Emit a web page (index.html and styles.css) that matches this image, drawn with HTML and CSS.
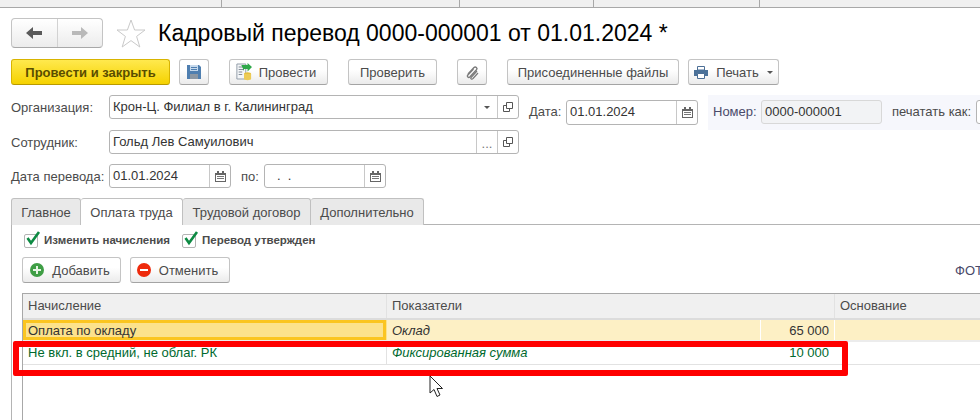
FILE: index.html
```html
<!DOCTYPE html>
<html lang="ru">
<head>
<meta charset="utf-8">
<title>Кадровый перевод</title>
<link rel="stylesheet" href="styles.css">
</head>
<body>
<div class="page">
  <div class="topstrip"><i class="s1"></i><i class="s2"></i><i class="s3"></i><i class="s4"></i></div>

  <div class="header">
    <div class="nav">
      <span class="nav-b"><svg width="16" height="12" viewBox="0 0 16 12"><path d="M0 6L7 0V4H16V8H7V12Z" fill="#5a5a5a"/></svg></span>
      <span class="nav-b"><svg width="16" height="12" viewBox="0 0 16 12"><path d="M16 6L9 0V4H0V8H9V12Z" fill="#b9b9b9"/></svg></span>
    </div>
    <svg class="star" width="30" height="29" viewBox="0 0 30 29"><path d="M15 1L18.6 11H29L20.6 17.4L23.8 28L15 21.6L6.2 28L9.4 17.4L1 11H11.4Z" fill="#fff" stroke="#c9c9c9"/></svg>
    <h1 class="title">Кадровый перевод 0000-000001 от 01.01.2024 *</h1>
  </div>

  <div class="toolbar">
    <button class="btn primary">Провести и закрыть</button>
    <button class="btn icon save"><svg width="16" height="16" viewBox="0 0 16 16"><path d="M1 1H13L15 3V15H1Z" fill="#4f7fb0"/><path d="M4 1H12V7H4Z" fill="#c6d9ec"/><path d="M4 10H12V15H4Z" fill="#8b97a3"/><path d="M5 3H11V4H5ZM5 5H11V6H5Z" fill="#4f7fb0"/></svg></button>
    <button class="btn post"><svg width="16" height="18" viewBox="0 0 18 18" preserveAspectRatio="none"><path d="M1 1H11V16H1Z" fill="#f4f6f8" stroke="#8e9aa6"/><path d="M3 4H9M3 6.500H9M3 9H7M3 11.500H7" stroke="#7b8794"/><path d="M6 2H13V0L18 4L13 8.500V6H9V8Z" fill="#2fa84a"/><ellipse cx="13" cy="11" rx="4" ry="1.800" fill="#e5bf3c"/><path d="M9 11H17V16C17 17.500 9 17.500 9 16Z" fill="#eccb55"/></svg><span>Провести</span></button>
    <button class="btn check">Проверить</button>
    <button class="btn icon clip"><svg width="14" height="15" viewBox="0 0 14 15"><path d="M3 9L9 2.500C10.500 1 13 3 11.500 4.800L4.800 12C3.500 13.300 1.500 11.500 2.800 10L8.500 4" fill="none" stroke="#7a7a7a" stroke-width="1.400"/><path d="M12 6L6 12.500C5 13.800 7 14.800 8 13.500L13 8" fill="none" stroke="#7a7a7a" stroke-width="1.200"/></svg></button>
    <button class="btn files">Присоединенные файлы</button>
    <button class="btn print"><svg width="14" height="13" viewBox="0 0 14 13"><path d="M3.500.500H10.500V4H3.500Z" fill="#fff" stroke="#4c6f96"/><path d="M0 4H14V10H0Z" fill="#4c7299"/><path d="M3.500 7.500H10.500V12.500H3.500Z" fill="#fff" stroke="#4c6f96"/></svg><span>Печать</span><b class="caret"></b></button>
  </div>

  <div class="fields">
    <div class="fields-main">
      <div class="row">
        <label class="lbl">Организация:</label>
        <div class="input wide"><span class="val">Крон-Ц. Филиал в г. Калининград</span><span class="ib"><b class="caret"></b></span><span class="ib"><svg class="open" width="10" height="10" viewBox="0 0 10 10"><path d="M3.500.500H9.500V6.500H3.500ZM3.500 3.500H.500V9.500H6.500V6.500" fill="none" stroke="#555"/></svg></span></div>
      </div>
      <div class="row">
        <label class="lbl">Сотрудник:</label>
        <div class="input wide"><span class="val">Гольд Лев Самуилович</span><span class="ib dots">...</span><span class="ib"><svg class="open" width="10" height="10" viewBox="0 0 10 10"><path d="M3.500.500H9.500V6.500H3.500ZM3.500 3.500H.500V9.500H6.500V6.500" fill="none" stroke="#555"/></svg></span></div>
      </div>
      <div class="row">
        <label class="lbl">Дата перевода:</label>
        <div class="input date"><span class="val">01.01.2024</span><span class="ib"><svg width="11" height="11" viewBox="0 0 11 11"><path d="M0 2H11V11H0Z" fill="#666"/><path d="M2 0H4V3H2ZM7 0H9V3H7Z" fill="#666"/><path d="M1 4H10V10H1Z" fill="#fff"/><path d="M2 5H9V6H2ZM2 7H9V8H2Z" fill="#777"/></svg></span></div>
        <label class="lbl-to">по:</label>
        <div class="input date"><span class="val empty">. &nbsp;.</span><span class="ib"><svg width="11" height="11" viewBox="0 0 11 11"><path d="M0 2H11V11H0Z" fill="#666"/><path d="M2 0H4V3H2ZM7 0H9V3H7Z" fill="#666"/><path d="M1 4H10V10H1Z" fill="#fff"/><path d="M2 5H9V6H2ZM2 7H9V8H2Z" fill="#777"/></svg></span></div>
      </div>
    </div>
    <div class="fields-side">
      <label class="lbl-date">Дата:</label>
      <div class="input date d2"><span class="val">01.01.2024</span><span class="ib"><svg width="11" height="11" viewBox="0 0 11 11"><path d="M0 2H11V11H0Z" fill="#666"/><path d="M2 0H4V3H2ZM7 0H9V3H7Z" fill="#666"/><path d="M1 4H10V10H1Z" fill="#fff"/><path d="M2 5H9V6H2ZM2 7H9V8H2Z" fill="#777"/></svg></span></div>
      <div class="numpanel">
        <label class="lbl-num">Номер:</label>
        <div class="input num"><span class="val">0000-000001</span></div>
        <label class="lbl-print">печатать как:</label>
        <div class="input stub"></div>
      </div>
    </div>
  </div>

  <div class="tabs">
    <span class="tab">Главное</span>
    <span class="tab active">Оплата труда</span>
    <span class="tab">Трудовой договор</span>
    <span class="tab">Дополнительно</span>
  </div>

  <div class="panel">
    <div class="checks">
      <label class="chk"><span class="box"><svg width="16" height="16" viewBox="0 0 16 16"><path d="M2.500 7L6 12L14 1" fill="none" stroke="#0d8a43" stroke-width="2.600"/></svg></span>Изменить начисления</label>
      <label class="chk"><span class="box"><svg width="16" height="16" viewBox="0 0 16 16"><path d="M2.500 7L6 12L14 1" fill="none" stroke="#0d8a43" stroke-width="2.600"/></svg></span>Перевод утвержден</label>
    </div>
    <div class="actions">
      <button class="btn add"><svg width="14" height="14" viewBox="0 0 14 14"><circle cx="7" cy="7" r="7" fill="#3f9e45"/><path d="M6 3H8V6H11V8H8V11H6V8H3V6H6Z" fill="#e6f5e4"/></svg><span>Добавить</span></button>
      <button class="btn cancel"><svg width="14" height="14" viewBox="0 0 14 14"><circle cx="7" cy="7" r="7" fill="#ee2a0c"/><path d="M3 6H11V8H3Z" fill="#fff"/></svg><span>Отменить</span></button>
      <span class="fot">ФОТ</span>
    </div>
    <div class="grid">
      <div class="g-row g-head"><span class="c1">Начисление</span><span class="c2">Показатели</span><span class="c4">Основание</span></div>
      <div class="g-row g-sel"><span class="c1"><em class="cur">Оплата по окладу</em></span><span class="c2 it">Оклад</span><span class="c3">65 000</span><span class="c4"></span></div>
      <div class="g-row g-new"><span class="c1">Не вкл. в средний, не облаг. РК</span><span class="c2 it">Фиксированная сумма</span><span class="c3">10 000</span><span class="c4"></span></div>
    </div>
  </div>

  <div class="redbox"></div>
  <svg class="cursor" width="16" height="24" viewBox="0 0 16 24"><path d="M1 1V18L5 14.500L8 21.500L11 20L8 13.500H13.500Z" fill="#fff" stroke="#222"/></svg>
</div>
</body>
</html>
```
FILE: styles.css
```css
* { box-sizing: border-box; }
html, body { margin: 0; padding: 0; background: #fff; }
.page {
  position: relative;
  width: 980px;
  height: 420px;
  overflow: hidden;
  font: 13px "Liberation Sans", Arial, sans-serif;
  color: #4b4b4b;
}
.topstrip {
  position: relative;
  height: 8px;
  background: #f0f0f0;
  border-bottom: 1px solid #a8a8a8;
}
.topstrip i { position: absolute; top: 0; width: 1px; height: 7px; background: #a8a8a8; }
.s1 { left: 221px; } .s2 { left: 459px; } .s3 { left: 593px; } .s4 { left: 759px; }

.header { display: flex; align-items: center; height: 30px; margin: 10px 0 0 11px; }
.nav {
  display: flex; width: 92px; height: 30px;
  border: 1px solid #c4c4c4; border-bottom-color: #a8a8a8; border-radius: 4px;
  background: linear-gradient(#fff, #ececec);
}
.nav-b { flex: 1; display: flex; align-items: center; justify-content: center; }
.nav-b + .nav-b { border-left: 1px solid #d2d2d2; }
.star { margin-left: 13px; }
.title { margin: 0 0 0 12px; font-size: 23px; font-weight: 400; color: #000; line-height: 30px; white-space: nowrap; }

.toolbar { display: flex; height: 26px; margin: 11px 0 0 11px; }
.btn {
  display: flex; flex: none; align-items: center; justify-content: center; gap: 8px;
  height: 26px; padding: 0; font: inherit; color: #4b4b4b;
  border: 1px solid #c4c4c4; border-bottom-color: #a4a4a4; border-radius: 3px;
  background: linear-gradient(#fff 40%, #ebebeb);
  white-space: nowrap;
}
.primary { width: 159px; font-weight: 700; color: #5a4d00; border-color: #d8b400 #d8b400 #b89a00; background: linear-gradient(#ffe94e, #f5d200); }
.save { width: 30px; margin-left: 9px; }
.post { width: 99px; margin-left: 20px; padding-right: 5px; gap: 7px; }
.check { width: 89px; margin-left: 20px; }
.clip { width: 30px; margin-left: 20px; }
.files { width: 172px; margin-left: 20px; }
.print { width: 91px; margin-left: 9px; }
.caret { display: inline-block; width: 0; height: 0; border: 3px solid transparent; border-top: 3px solid #555; border-bottom: 0; }

.fields { display: flex; margin-top: 10px; height: 93px; }
.fields-main { width: 519px; flex: none; padding-left: 11px; display: flex; flex-direction: column; gap: 11px; }
.row { display: flex; align-items: center; height: 24px; }
.row + .row + .row { margin-top: -1px; }
.lbl { width: 98px; flex: none; white-space: nowrap; }
.input {
  display: flex; flex: none; height: 24px; background: #fff;
  border: 1px solid #b4b4b4; border-radius: 3px; color: #333;
}
.wide { width: 410px; }
.date { width: 122px; }
.val { flex: 1; padding-left: 3px; line-height: 22px; white-space: nowrap; overflow: hidden; }
.empty { padding-left: 12px; }
.ib { width: 21px; flex: none; display: flex; align-items: center; justify-content: center; border-left: 1px solid #c8c8c8; }
.dots { color: #777; padding-top: 3px; }
.lbl-to { margin: 0 6px 0 10px; width: 17px; flex: none; }
.fields-side { flex: 1; display: flex; align-items: flex-start; min-width: 0; }
.lbl-date { margin: 9px 6px 0 10px; width: 31px; flex: none; }
.d2 { width: 132px; margin-top: 5px; height: 25px; }
.numpanel { display: flex; align-items: flex-start; height: 35px; margin-left: 10px; padding-left: 5px; width: 400px; background: #f6f7fc; flex: none; }
.lbl-num { width: 48px; flex: none; margin-top: 9px; color: #4a4a6a; }
.num { width: 121px; margin-top: 5px; background: #f2f3f5; border-color: #d8d8d8; }
.lbl-print { margin: 9px 0 0 10px; width: 84px; flex: none; white-space: nowrap; }
.stub { width: 40px; margin-top: 5px; }

.tabs { display: flex; height: 26px; margin: 10px 0 0 11px; position: relative; }
.tab {
  display: flex; align-items: center; justify-content: center; height: 27px;
  background: #e9e9e9; border: 1px solid #c0c0c0; border-bottom: 0; border-left: 0; border-radius: 3px 3px 0 0;
}
.tab:nth-child(1) { width: 70px; border-left: 1px solid #c0c0c0; }
.tab:nth-child(2) { width: 102px; background: #fff; position: relative; z-index: 1; height: 27px; }
.tab:nth-child(3) { width: 128px; }
.tab:nth-child(4) { width: 113px; }

.panel { margin-left: 11px; height: 196px; border-left: 1px solid #b4b4b4; border-top: 1px solid #b4b4b4; padding: 7px 0 0 10px; }
.checks { display: flex; gap: 10px; height: 16px; }
.chk { display: flex; align-items: center; gap: 6px; font-size: 11.500px; font-weight: 700; color: #4b4b4b; white-space: nowrap; }
.box { position: relative; width: 14px; height: 14px; margin: 2px 0 0 2px; border: 1px solid #b4b4b4; border-radius: 2px; background: #fff; }
.box svg { position: absolute; left: 0; top: -4px; }
.actions { display: flex; align-items: center; height: 26px; margin-top: 9px; }
.add { width: 99px; padding-right: 3px; }
.cancel { width: 100px; margin-left: 9px; padding-right: 5px; }
.fot { flex: none; margin-left: 725px; color: #4a4a6a; white-space: nowrap; }
.grid { margin-top: 10px; border-top: 1px solid #a8a8a8; border-left: 1px solid #a8a8a8; height: 200px; }
.g-row { display: flex; width: 960px; }
.g-row > span { display: block; padding: 0 5px; white-space: nowrap; border-right: 1px solid #e2e2e2; }
.c1 { width: 364px; flex: none; }
.c2 { width: 374px; flex: none; }
.c3 { width: 74px; flex: none; text-align: right; }
.c4 { flex: 1; border-right: 0 !important; }
.g-head { height: 26px; line-height: 23px; background: #f0f0f0; border-bottom: 2px solid #dcdcdc; }
.g-head .c2 { width: 448px; }
.g-sel { height: 22px; line-height: 22px; background: #fdf0c5; border-bottom: 2px solid #ececec; color: #333; }
.g-sel > span { border-right-color: #fff; }
.g-sel .c1 { padding: 0; background: #fce28c; border-right: 0; }
.cur { display: block; height: 20px; line-height: 15px; padding: 0 2px; width: 363px; font-style: normal; border: 3px solid #fbc520; }
.g-new { height: 23px; line-height: 22px; color: #00692e; border-bottom: 1px solid #e2e2e2; }
.g-new .c2, .g-new .c3 { border-right-color: transparent; }
.it { font-style: italic; }

.redbox { position: absolute; left: 13px; top: 341px; width: 835px; height: 35px; border: 6px solid #f00; border-radius: 2px; }
.cursor { position: absolute; left: 429px; top: 375px; }
```
